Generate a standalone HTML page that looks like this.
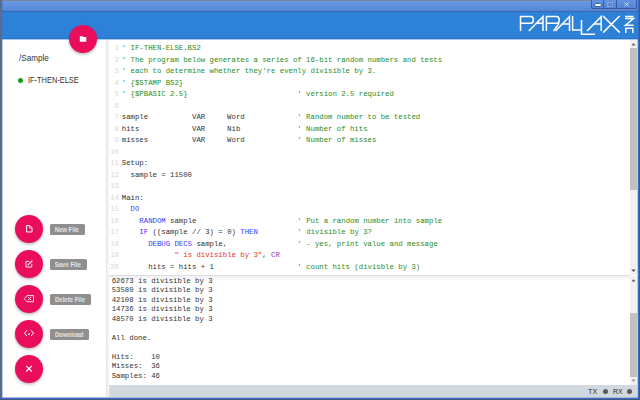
<!DOCTYPE html>
<html><head><meta charset="utf-8">
<style>
*{margin:0;padding:0;box-sizing:border-box}
html,body{width:640px;height:400px;overflow:hidden;background:#fff}
body{position:relative;font-family:"Liberation Sans",sans-serif}
.abs{position:absolute}
#frameTop{left:0;top:0;width:640px;height:1px;background:#7a8494}
#title{left:0;top:1px;width:640px;height:11px;background:linear-gradient(#6a9ae6,#5283d2)}
#titleLine{left:0;top:11px;width:640px;height:1px;background:#3a66b4}
#header{left:0;top:12px;width:640px;height:27px;background:#2d82d8}
#headerBot{left:0;top:38px;width:640px;height:1px;background:#2776cc}
#headerAA{left:0;top:39px;width:640px;height:1px;background:rgba(40,120,210,.4)}
#frameL{left:0;top:0;width:3px;height:400px;background:linear-gradient(90deg,#5a6a88 0,#5a6a88 1px,#4070c0 1px,#4070c0 2px,rgba(64,112,192,.35) 2px)}
#frameR{left:637px;top:0;width:3px;height:400px;background:linear-gradient(90deg,rgba(64,112,192,.35) 0,rgba(64,112,192,.35) 1px,#3b6bc6 1px,#3b6bc6 2px,#42587e 2px)}
#frameB{left:0;top:397px;width:640px;height:3px;background:linear-gradient(rgba(59,100,180,.45) 0,rgba(59,100,180,.45) 1px,#3b6bc6 1px,#3b6bc6 2px,#42587e 2px)}
#sidebar{left:3px;top:40px;width:103px;height:357px;background:#fff}
#divider{left:106px;top:40px;width:4px;height:357px;background:linear-gradient(90deg,#e2e2e2 0,#ececec 25%,#f5f5f5 55%,rgba(255,255,255,0) 100%)}
.code{font-family:"Liberation Mono",monospace;font-size:7.32px;white-space:pre}
#editor{left:107px;top:40px;width:530px;height:235px;background:#fff;overflow:hidden}
#gutter{left:0;top:3.3px;width:12px;text-align:right;color:#d6d6d6;line-height:11.5px}
#lines{left:14.8px;top:3.3px;color:#333;line-height:11.5px}
.c{color:#1f8d1f}.k{color:#3a3af8}.s{color:#ee2c2c}.p{color:#86389c}
#sep{left:107px;top:275px;width:523px;height:1px;background:#dedede}
#term{left:107px;top:276px;width:530px;height:109px;background:#fff;overflow:hidden}
#termtxt{left:4.7px;top:0.5px;color:#333;line-height:9.5px}
#status{left:107px;top:385px;width:530px;height:12px;background:#d2d9de}
.sb{width:7px;background:#f1f1f1}
.thumb{background:#c1c1c1}
.fab{position:absolute;left:15px;width:28px;height:28px;border-radius:50%;background:#e90d5c;box-shadow:0 1.5px 3px rgba(0,0,0,.28)}
.fab svg{position:absolute;left:0;top:0}
.lbl{position:absolute;left:50px;height:10.5px;background:#8f8f8f;border-radius:1.5px;color:#e4e4e4;font-weight:bold;font-size:6.8px;line-height:11.1px;text-align:center;white-space:nowrap}
.lbl span{display:inline-block;transform:scaleX(.88);position:relative;left:-0.4px}
</style></head><body>
<div id="frameTop" class="abs"></div>
<div id="title" class="abs"></div>
<div id="titleLine" class="abs"></div>
<div id="header" class="abs"></div>
<div id="headerBot" class="abs"></div>
<div id="headerAA" class="abs"></div>

<!-- window buttons -->
<div class="abs" style="left:591px;top:0;width:46px;height:9px;border:1px solid #3a5a9c;border-top:none;border-radius:0 0 2px 2px;background:linear-gradient(#6294e2,#5384d4)"></div>
<div class="abs" style="left:603px;top:0;width:1px;height:8px;background:#3a5a9c"></div>
<div class="abs" style="left:616px;top:0;width:1px;height:8px;background:#3a5a9c"></div>
<div class="abs" style="left:594.5px;top:4.3px;width:6px;height:2px;background:#fff;border-radius:1px;box-shadow:0 0 0 0.6px #2c3f78"></div>
<div class="abs" style="left:607px;top:2px;width:6px;height:5px;border:1px dotted #a2b4d4"></div>
<svg class="abs" style="left:623px;top:2px" width="7" height="6" viewBox="0 0 7 6"><path d="M1.5 0.6L5.8 4.2M5.8 0.6L1.5 4.2" stroke="#d3dcea" stroke-width="0.95"/></svg>

<!-- PARALLAX logo -->
<svg class="abs" style="left:0;top:0" width="640" height="40" viewBox="0 0 640 40">
<g fill="none" stroke="#fff" stroke-width="1.5" stroke-linecap="butt">
<path d="M520.5 31V16.6H530.5Q533.3 16.6 533.3 19.4V20.4Q533.3 23.2 530.5 23.2H520.5"/>
<path d="M528.8 31L543 16.6V31M535.7 23.2H543"/>
<path d="M546.4 31V16.6H556.4Q559.2 16.6 559.2 19.4V20.4Q559.2 23.2 556.4 23.2H546.4M559.2 23.2L553.5 31"/>
<path d="M555.5 31L569.5 16.6V31M562.4 23.9H569.5"/>
<path d="M572.6 16V30H581.5"/>
<path d="M581.5 20V34.3H595"/>
<path d="M587 31L601.2 16.6V31M594 23.9H601.2"/>
<path d="M603 16L619.8 32.6M619.6 16L603.1 32.6"/>
<path d="M625 16.4H633.5M625 18.6H633.5L625.5 25.2H633.5M625.8 33V28.2H632.8V33"/>
</g>
</svg>

<div id="frameL" class="abs"></div>
<div id="frameR" class="abs"></div>
<div id="frameB" class="abs"></div>

<div id="sidebar" class="abs"></div>
<div class="abs" style="left:18.5px;top:52.5px;font-size:9px;color:#333;transform:scaleX(0.9);transform-origin:0 0">/Sample</div>
<div class="abs" style="left:18px;top:77.5px;width:5px;height:5px;border-radius:50%;background:#1a9a1a"></div>
<div class="abs" style="left:28.3px;top:74.5px;font-size:9px;color:#333;transform:scaleX(0.825);transform-origin:0 0">IF-THEN-ELSE</div>


<div id="editor" class="abs">
<div id="gutter" class="abs code">1
2
3
4
5
6
7
8
9
10
11
12
13
14
15
16
17
18
19
20</div>
<div id="lines" class="abs code"><span class="c">' IF-THEN-ELSE.BS2</span>
<span class="c">' The program below generates a series of 16-bit random numbers and tests</span>
<span class="c">' each to determine whether they're evenly divisible by 3.</span>
<span class="c">' {$STAMP BS2}</span>
<span class="c">' {$PBASIC 2.5}                         ' version 2.5 required</span>

sample          VAR     Word            <span class="c">' Random number to be tested</span>
hits            VAR     Nib             <span class="c">' Number of hits</span>
misses          VAR     Word            <span class="c">' Number of misses</span>

Setup:
  sample = 11500

Main:
  <span class="k">DO</span>
    <span class="k">RANDOM</span> sample                       <span class="c">' Put a random number into sample</span>
    <span class="k">IF</span> ((sample // 3) = 0) <span class="k">THEN</span>         <span class="c">' divisible by 3?</span>
      <span class="k">DEBUG DEC5</span> sample,                <span class="c">' - yes, print value and message</span>
            <span class="s">" is divisible by 3"</span>, <span class="p">CR</span>
      hits = hits + 1                   <span class="c">' count hits (divisble by 3)</span>
</div>
<!-- editor scrollbar -->
<div class="abs sb" style="left:523px;top:0px;height:235px"></div>
<div class="abs thumb" style="left:523px;top:8px;width:7px;height:142px"></div>
<svg class="abs" style="left:523px;top:2px" width="7" height="4"><path d="M1.3 3.4L3.5 1L5.7 3.4Z" fill="#6a6a6a"/></svg>
<svg class="abs" style="left:523px;top:229px" width="7" height="4"><path d="M1.3 0.6L3.5 3L5.7 0.6Z" fill="#505050"/></svg>
</div>

<div id="sep" class="abs"></div>

<div id="term" class="abs">
<div class="abs" style="left:0;top:0;width:523px;height:5px;background:linear-gradient(#f0f0f0,rgba(255,255,255,0))"></div>
<div id="termtxt" class="abs code">62673 is divisible by 3
53580 is divisible by 3
42108 is divisible by 3
14736 is divisible by 3
48570 is divisible by 3

All done.

Hits:    10
Misses:  36
Samples: 46</div>
<div class="abs sb" style="left:523px;top:0;height:109px"></div>
<div class="abs thumb" style="left:523px;top:37px;width:7px;height:64px"></div>
<svg class="abs" style="left:523px;top:2px" width="7" height="4"><path d="M1.5 3.5L3.5 1.2L5.5 3.5Z" fill="#505050"/></svg>
<svg class="abs" style="left:523px;top:103px" width="7" height="4"><path d="M1.5 0.5L3.5 2.8L5.5 0.5Z" fill="#8a8a8a"/></svg>
</div>

<div id="status" class="abs"></div>
<div class="abs" style="left:588px;top:386.8px;font-size:8px;line-height:10px;color:#2a2a2a;transform:scaleX(0.9);transform-origin:0 0">TX</div>
<div class="abs" style="left:602.5px;top:389px;width:5px;height:5px;border-radius:50%;background:#5a5a5a"></div>
<div class="abs" style="left:613px;top:386.8px;font-size:8px;line-height:10px;color:#2a2a2a;transform:scaleX(0.86);transform-origin:0 0">RX</div>
<div class="abs" style="left:627px;top:389px;width:5px;height:5px;border-radius:50%;background:#5a5a5a"></div>

<div id="divider" class="abs"></div>

<!-- top FAB -->
<div class="fab" style="left:69px;top:25.1px">
<svg width="28" height="28" viewBox="0 0 28 28"><path d="M10.8 11.2H13.5L14.4 12.1H17.3V16.8H10.8Z" fill="#fff"/></svg>
</div>

<!-- left FABs -->
<div class="fab" style="top:215px">
<svg width="28" height="28" viewBox="0 0 28 28"><path d="M11.6 10.6H14.8L17 12.8V17H11.6Z" fill="none" stroke="#fff" stroke-width="1"/><path d="M14.6 10.8V13.2H17" fill="none" stroke="#fff" stroke-width="0.7"/></svg>
</div>
<div class="lbl" style="top:224.3px;width:34.7px"><span>New File</span></div>

<div class="fab" style="top:250px">
<svg width="28" height="28" viewBox="0 0 28 28"><path d="M14.2 11.4H11V17H16.8V13.8" fill="none" stroke="#fff" stroke-width="0.9"/><path d="M12.8 15.2L17.4 10.6" stroke="#fff" stroke-width="1.1"/></svg>
</div>
<div class="lbl" style="top:259.3px;width:36.6px"><span>Save File</span></div>

<div class="fab" style="top:285px">
<svg width="28" height="28" viewBox="0 0 28 28"><path d="M12 10.6H18.5V16.8H12L9.2 13.7Z" fill="none" stroke="#fff" stroke-width="0.85"/><path d="M13.2 12.2L16 15M16 12.2L13.2 15" stroke="#fff" stroke-width="0.9"/></svg>
</div>
<div class="lbl" style="top:294.3px;width:40.5px"><span>Delete File</span></div>

<div class="fab" style="top:320px">
<svg width="28" height="28" viewBox="0 0 28 28"><path d="M12 10.3L9.5 13.2L12 16.1M16 10.3L18.5 13.2L16 16.1" fill="none" stroke="#fff" stroke-width="1"/><circle cx="14" cy="14.2" r="0.85" fill="#fff"/></svg>
</div>
<div class="lbl" style="top:329.3px;width:38.6px"><span>Download</span></div>

<div class="fab" style="top:355px">
<svg width="28" height="28" viewBox="0 0 28 28"><path d="M11.2 10.9L16.8 16.5M16.8 10.9L11.2 16.5" stroke="#fff" stroke-width="1.2"/></svg>
</div>

</body></html>
